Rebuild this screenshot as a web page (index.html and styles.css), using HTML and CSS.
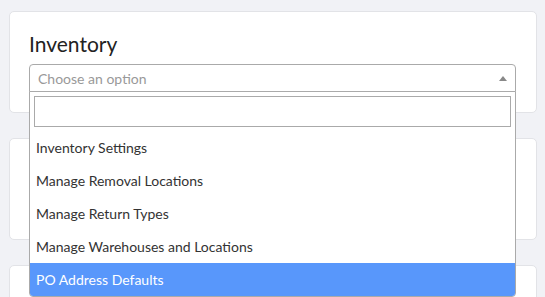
FILE: index.html
```html
<!DOCTYPE html>
<html>
<head>
<meta charset="utf-8">
<link rel="stylesheet" href="styles.css">
</head>
<body>
<div class="page">
  <div class="card">
    <h2 class="title">Inventory</h2>
    <div class="select-wrap">
      <div class="select open">
        <span class="placeholder">Choose an option</span>
        <span class="arrow"></span>
      </div>
      <div class="dropdown">
        <div class="search"><input class="search-input" type="text"></div>
        <ul class="options">
          <li class="option">Inventory Settings</li>
          <li class="option">Manage Removal Locations</li>
          <li class="option">Manage Return Types</li>
          <li class="option">Manage Warehouses and Locations</li>
          <li class="option highlighted">PO Address Defaults</li>
        </ul>
      </div>
    </div>
  </div>
  <div class="card card-empty"></div>
  <div class="card card-empty"></div>
</div>
</body>
</html>
```

FILE: styles.css
```css
html, body {
  margin: 0;
  padding: 0;
  background: #f1f2f6;
  font-family: "Lato", "Noto Sans", sans-serif;
  overflow: hidden;
  height: 297px;
}
.page {
  padding: 11px 8px 0 9px;
  display: flex;
  flex-direction: column;
  gap: 25px;
}
.card {
  background: #fff;
  border: 1px solid #e2e3e7;
  border-radius: 5px;
  padding: 19px 20px 20px 19px;
  box-sizing: border-box;
}
.card-empty {
  height: 102px;
}
.title {
  margin: 0 0 7px 0;
  font-size: 21px;
  font-weight: 400;
  line-height: 26px;
  color: #222;
}
.select-wrap {
  position: relative;
}
.select {
  height: 28px;
  box-sizing: border-box;
  border: 1px solid #aaa;
  border-radius: 4px 4px 0 0;
  display: flex;
  align-items: center;
  padding: 0 8px;
  justify-content: space-between;
}
.placeholder {
  color: #999;
  font-size: 14px;
  padding-top: 1px;
}
.arrow {
  width: 0;
  height: 0;
  border-left: 4px solid transparent;
  border-right: 4px solid transparent;
  border-bottom: 5px solid #888;
}
.dropdown {
  position: absolute;
  left: 0;
  right: 0;
  top: 27px;
  background: #fff;
  border: 1px solid #aaa;
  border-radius: 0 0 4px 4px;
  z-index: 5;
  overflow: hidden;
}
.search {
  padding: 4px;
}
.search-input {
  display: block;
  width: 100%;
  height: 31px;
  box-sizing: border-box;
  border: 1px solid #aaa;
  margin: 0;
  outline: none;
}
.options {
  list-style: none;
  margin: 0;
  padding: 0;
}
.option {
  height: 33px;
  line-height: 34px;
  padding: 0 6px;
  font-size: 14px;
  color: #333;
}
.highlighted {
  background: #5897fb;
  color: #fff;
}
```
